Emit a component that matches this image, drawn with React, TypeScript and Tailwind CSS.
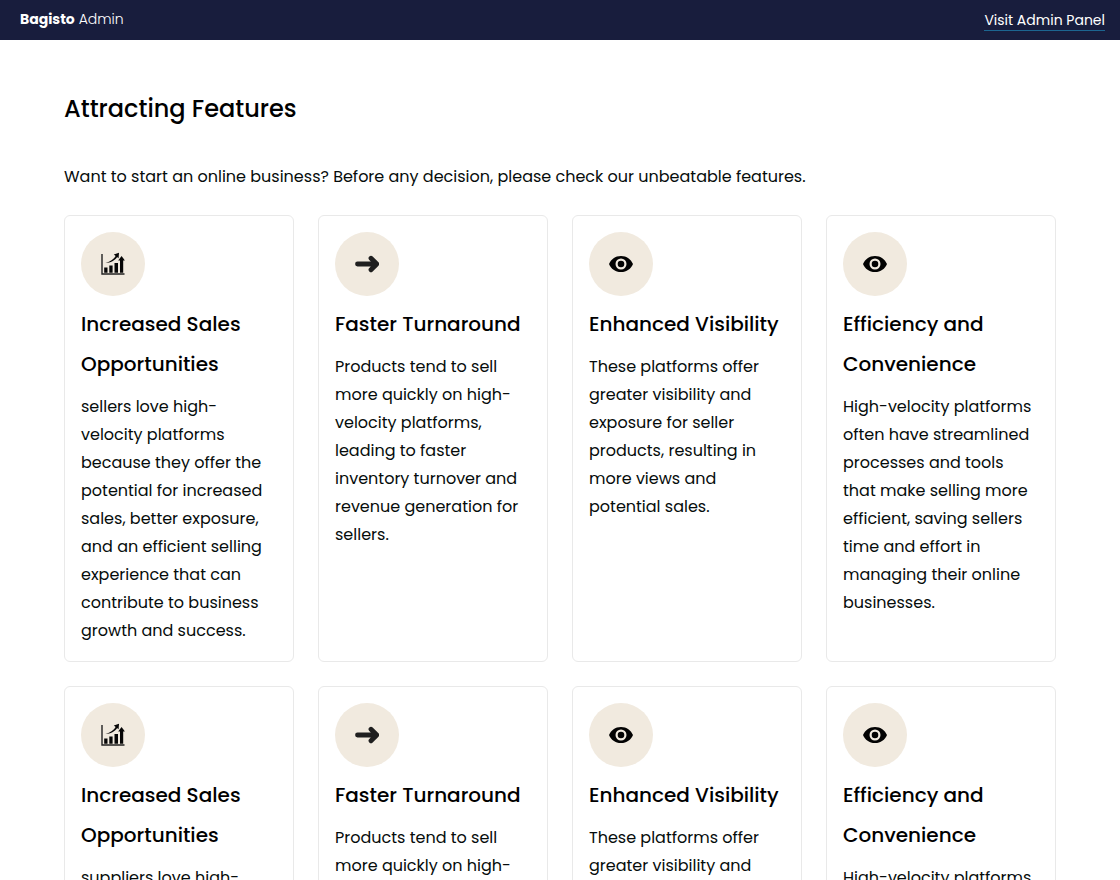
type IconName = "chart" | "arrow" | "eye";

type Feature = {
	icon: IconName;
	title: string;
	description: string;
};

const ChartIcon = () => (
	<svg width="24" height="24" viewBox="0 0 24 24" fill="none" aria-hidden="true">
		<path d="M1 2v20h22.5" stroke="#222" strokeWidth="1.4" />
		<path
			d="M3.2 15.500h3.300v5.200H3.200zM8.300 13.500h3.300v7.200H8.300zM13.500 11h3.500v9.700h-3.500zM19 8h3.200v12.700H19z"
			fill="#060606"
		/>
		<path d="M17.200 8.500L20.600 4l3.300 4.500z" fill="#060606" />
		<path d="M4.500 11c5-.2 9.500-2.500 12-6.500l-1.500-1c-2 3.500-5.500 6-10.500 7.500z" fill="#060606" />
		<path d="M12.800 2.500L18 .8l-.4 5.400z" fill="#060606" />
	</svg>
);

const ArrowIcon = () => (
	<svg width="24" height="24" viewBox="0 0 24 24" fill="none" aria-hidden="true">
		<path
			d="M2.500 12H21M16 6.200L21.800 12 16 17.800"
			stroke="#1f1f1f"
			strokeWidth="4.800"
			strokeLinecap="round"
			strokeLinejoin="round"
		/>
	</svg>
);

const EyeIcon = () => (
	<svg width="24" height="24" viewBox="0 0 24 24" aria-hidden="true">
		<path
			d="M12 3.900C6.300 3.900 2 7.200 0 12c2 4.800 6.300 8.100 12 8.100s10-3.300 12-8.100c-2-4.800-6.300-8.100-12-8.100zm0 13.600a5.500 5.500 0 1 1 0-11 5.500 5.500 0 0 1 0 11zm0-2.200a3.300 3.300 0 1 0 0-6.600 3.300 3.300 0 0 0 0 6.600z"
			fill="#030303"
		/>
	</svg>
);

const icons = {
	chart: ChartIcon,
	arrow: ArrowIcon,
	eye: EyeIcon,
};

const getFeatures = (audience: string): Feature[] => [
	{
		icon: "chart",
		title: "Increased Sales Opportunities",
		description: `${audience} love high-velocity platforms because they offer the potential for increased sales, better exposure, and an efficient selling experience that can contribute to business growth and success.`,
	},
	{
		icon: "arrow",
		title: "Faster Turnaround",
		description:
			"Products tend to sell more quickly on high-velocity platforms, leading to faster inventory turnover and revenue generation for sellers.",
	},
	{
		icon: "eye",
		title: "Enhanced Visibility",
		description:
			"These platforms offer greater visibility and exposure for seller products, resulting in more views and potential sales.",
	},
	{
		icon: "eye",
		title: "Efficiency and Convenience",
		description:
			"High-velocity platforms often have streamlined processes and tools that make selling more efficient, saving sellers time and effort in managing their online businesses.",
	},
];

const features = [...getFeatures("sellers"), ...getFeatures("suppliers")];

const FeatureCard = ({ feature }: { feature: Feature }) => {
	const Icon = icons[feature.icon];

	return (
		<article className="rounded-md border border-[#e9e9e9] p-4">
			<div className="mb-2 flex size-16 items-center justify-center rounded-full bg-[#f1eadf]">
				<Icon />
			</div>
			<h2 className="text-[20px] leading-10 font-medium">{feature.title}</h2>
			<p className="mt-[9px] text-[16px] leading-7 text-[#060c0b]">{feature.description}</p>
		</article>
	);
};

const App = () => {
	return (
		<div className="min-h-screen bg-white font-['Poppins','Inter',sans-serif] text-black">
			{/* Admin bar */}
			<header className="flex h-10 items-center justify-between bg-[#181d3d] pr-[15px] pl-5 text-[14px] leading-5 text-white">
				<div className="pb-0.5 font-light">
					<strong className="font-bold">Bagisto</strong> Admin
				</div>
				<a href="#admin" className="border-b border-[#1c6590]">
					Visit Admin Panel
				</a>
			</header>

			{/* Features */}
			<main className="px-16 pt-[51px] pb-16">
				<h1 className="text-[24px] leading-9 font-medium">Attracting Features</h1>
				<p className="mt-9 text-[16px] leading-7 text-[#060c0b]">
					Want to start an online business? Before any decision, please check our unbeatable
					features.
				</p>
				<div className="mt-6 grid grid-cols-1 gap-6 sm:grid-cols-2 lg:grid-cols-4">
					{features.map((feature, index) => (
						<FeatureCard key={index} feature={feature} />
					))}
				</div>
			</main>
		</div>
	);
};

export default App;
